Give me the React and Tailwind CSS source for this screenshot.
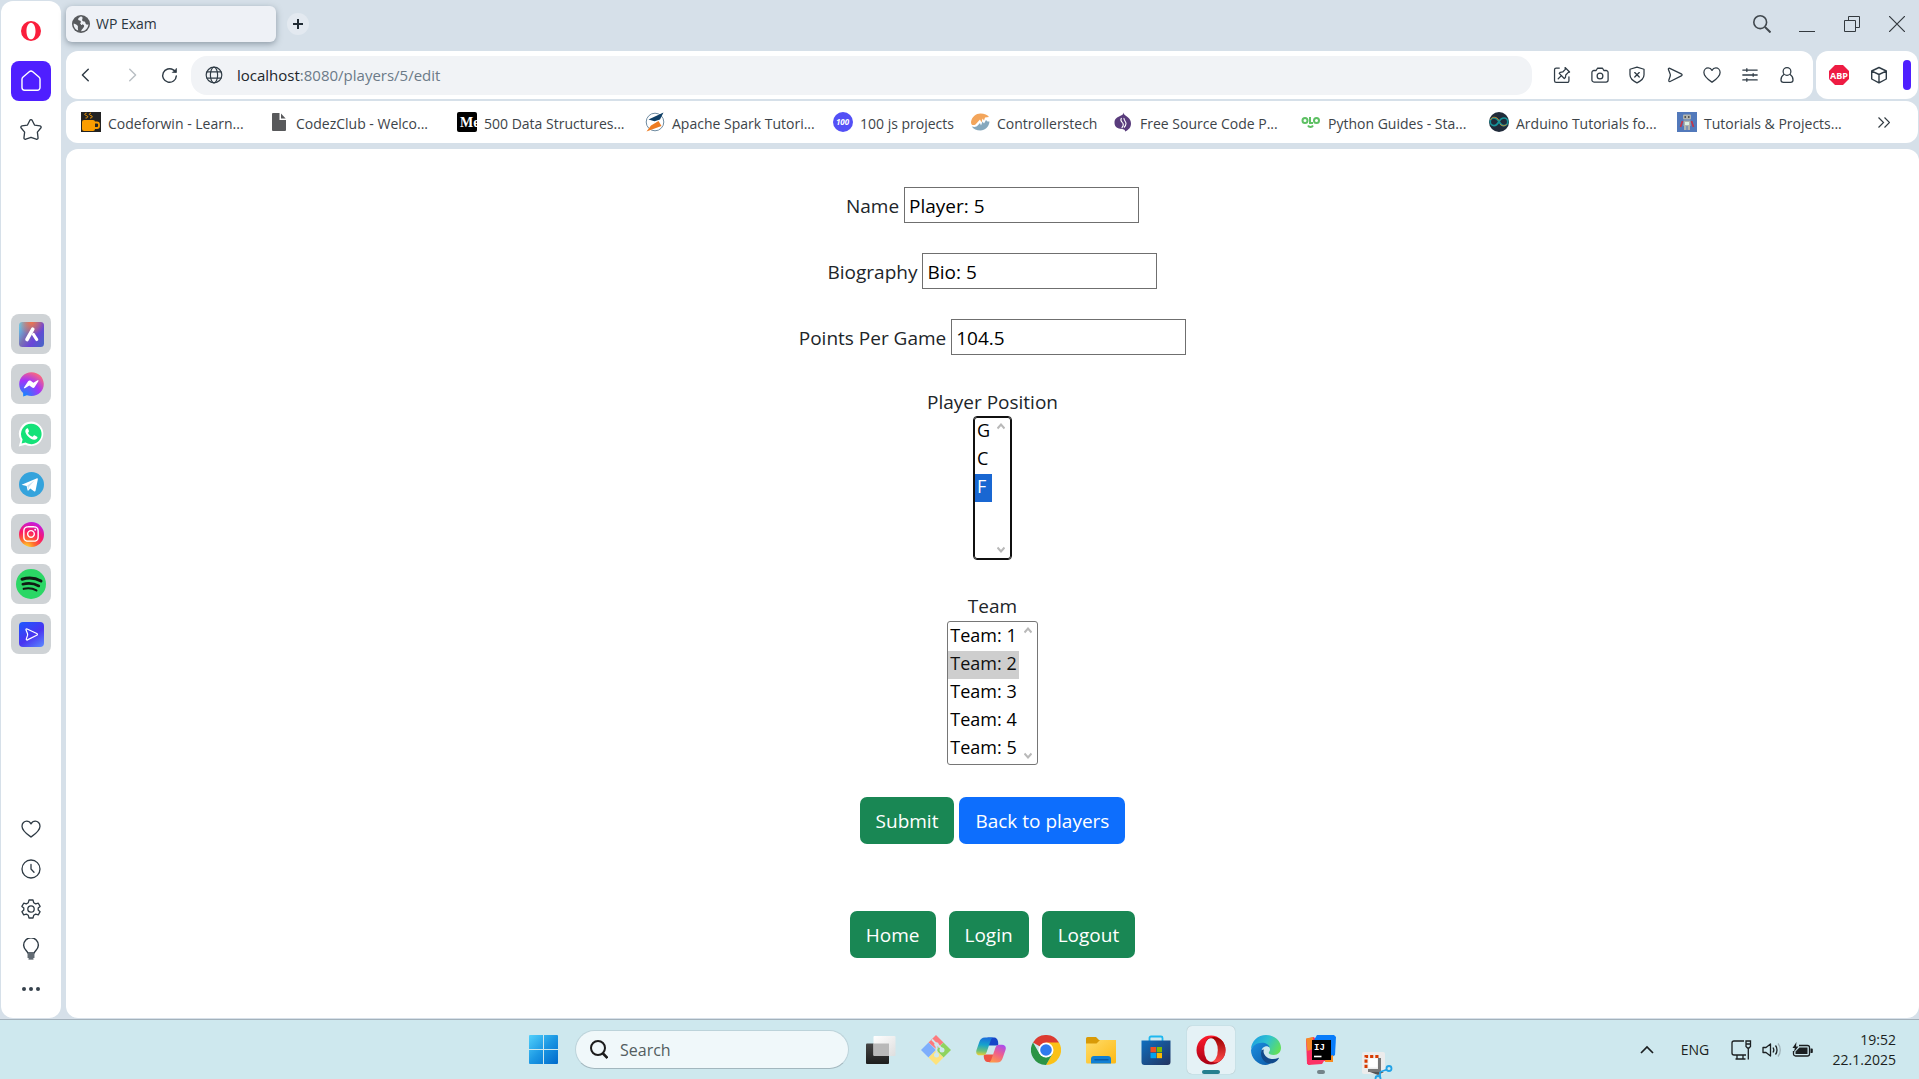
import React from "react";
import { FaInstagram } from "react-icons/fa";

function Line({ size = 20, width = 1.5, children, className = "text-[#2f3b45]" }) {
  return (
    <svg
      width={size}
      height={size}
      viewBox="0 0 20 20"
      fill="none"
      stroke="currentColor"
      strokeWidth={width}
      strokeLinecap="round"
      strokeLinejoin="round"
      className={"shrink-0 " + className}
      aria-hidden="true"
    >
      {children}
    </svg>
  );
}

const heart = <path d="M10 18C7 15.900 1 12 1 7.200 1 4.200 3.300 2.200 5.700 2.200c1.900 0 3.400 1 4.300 2.700.9-1.700 2.400-2.700 4.300-2.700 2.400 0 4.700 2 4.700 5 0 4.800-6 8.700-9 10.800z" />;
const sendShape = <path d="M4.200 2.600 17 8.700c1.200.6 1.200 1.700 0 2.300L4.600 17.200c-1 .5-1.900-.4-1.500-1.400l1.600-4.600c.2-.7.2-1.400 0-2.100L2.700 4c-.4-1 .5-1.900 1.500-1.400z" />;

/* ---------- Sidebar ---------- */

function AriaLogo() {
  return (
    <svg width="25" height="25" viewBox="0 0 25 25">
      <defs>
        <linearGradient id="aria" x1="0" y1="0.2" x2="1" y2="0.8">
          <stop offset="0" stopColor="#63c6ea" />
          <stop offset=".35" stopColor="#7a6fb4" />
          <stop offset=".65" stopColor="#6a45d8" />
          <stop offset="1" stopColor="#4b62c8" />
        </linearGradient>
        <radialGradient id="ariaTop" cx=".5" cy="0" r=".55">
          <stop offset="0" stopColor="#f0724c" />
          <stop offset="1" stopColor="#f0724c" stopOpacity="0" />
        </radialGradient>
      </defs>
      <rect width="25" height="25" rx="3.500" fill="url(#aria)" />
      <rect width="25" height="25" rx="3.500" fill="url(#ariaTop)" />
      <path d="M13.800 7.200 8 17.500" stroke="#fff" strokeWidth="3.600" strokeLinecap="round" />
      <path d="m14.500 12.500 3.200 5" stroke="#fff" strokeWidth="3.200" strokeLinecap="round" />
    </svg>
  );
}

function MessengerLogo() {
  return (
    <svg width="25" height="25" viewBox="0 0 25 25">
      <defs>
        <radialGradient id="msg" cx=".2" cy="1" r="1.1">
          <stop offset="0" stopColor="#0a8cff" />
          <stop offset=".6" stopColor="#a334fa" />
          <stop offset="1" stopColor="#ff6a78" />
        </radialGradient>
      </defs>
      <path d="M12.500.2C5.500.2.200 5.300.200 12.200c0 3.600 1.500 6.700 3.900 8.800l.1 3.600 3.700-1.400c1.400.5 3 .8 4.600.8 7 0 12.300-5 12.300-11.900S19.500.2 12.500.2z" fill="url(#msg)" />
      <path d="m5 15.500 4.100-6.200c.6-.9 1.700-1.100 2.600-.5l2.700 2 4.200-2.500c.6-.3 1.200.2.9.8l-3.800 6c-.6.9-1.700 1.100-2.600.5l-2.800-2-4.400 2.600c-.6.400-1.300-.1-.9-.7z" fill="#fff" />
    </svg>
  );
}

function WhatsLogo() {
  return (
    <svg width="26" height="26" viewBox="0 0 26 26">
      <path d="M13.200.5A12.300 12.300 0 0 0 2.600 19L.8 25.400l6.500-1.700A12.300 12.300 0 1 0 13.200.5z" fill="#fff" />
      <path d="M13.200 2.800A10.200 10.200 0 0 0 4.600 18.400l-1 4 4-1A10.200 10.200 0 1 0 13.200 2.800z" fill="#15e279" />
      <path d="M9.700 7.200c-.9 0-2.400 1-2.400 3.100 0 3.500 5.500 8.500 9 8.500 1.700 0 3.200-1.300 3.200-2.500 0-.6-.3-.7-2.700-1.900-.7-.3-1 0-1.800 1-.4.5-.8.3-1.700-.1-1.200-.6-2.500-1.800-3.200-3.100-.3-.6.900-1.100.9-2 0-.4-.7-2.100-.9-2.500-.1-.4-.2-.5-.4-.5z" fill="#fff" />
    </svg>
  );
}

function TelegramLogo() {
  return (
    <span className="grid size-[25px] place-items-center rounded-full bg-[#34a3dc]">
      <svg width="25" height="25" viewBox="0 0 25 25">
        <path d="m3.200 12.400 14.300-6c.9-.4 1.500.1 1.300 1.200l-2.200 11c-.2 1-.8 1.200-1.600.7l-3.700-2.700-1.900 1.900c-.5.4-.8.3-.9-.4l-.9-4-4.300-1c-.7-.2-.7-.4-.1-.7z" fill="#fff" />
        <path d="m8.300 13.600 7.200-5-5.600 6.300-.5 2.800" fill="#c8e2f2" />
      </svg>
    </span>
  );
}

function InstaLogo() {
  return (
    <span className="grid size-[25px] place-items-center rounded-full bg-[radial-gradient(circle_at_30%_105%,#ffd22e_5%,#ff6a2c_28%,#fb1866_55%,#c41be0_85%,#7c1cf0)] text-white">
      <FaInstagram size={18} />
    </span>
  );
}

function SpotifyLogo() {
  return (
    <span className="grid size-[30px] place-items-center rounded-full bg-[#2bd765]">
      <svg width="30" height="30" viewBox="0 0 30 30" fill="none" stroke="#101a14" strokeLinecap="round">
        <path d="M6 10.200c6.500-1.900 13.500-1.300 19 1.800" strokeWidth="3" />
        <path d="M6.800 15.200c5.500-1.500 11.300-.9 16 1.800" strokeWidth="2.600" />
        <path d="M7.700 19.800c4.500-1 8.900-.6 12.700 1.600" strokeWidth="2.200" />
      </svg>
    </span>
  );
}

function PlayerLogo() {
  return (
    <span className="grid size-[25px] place-items-center rounded-[4px] bg-[linear-gradient(145deg,#1c59ff,#4a34f0_55%,#5b8cff)]">
      <Line size={15} width={1.6} className="text-white">{sendShape}</Line>
    </span>
  );
}

const apps = [
  ["Aria", AriaLogo],
  ["Messenger", MessengerLogo],
  ["WhatsApp", WhatsLogo],
  ["Telegram", TelegramLogo],
  ["Instagram", InstaLogo],
  ["Spotify", SpotifyLogo],
  ["Player", PlayerLogo],
];

function OperaO({ className, size }) {
  return (
    <svg width={size} height={size} viewBox="0 0 30 30" className={className}>
      <path fillRule="evenodd" d="M15 0a15 15 0 1 0 0 30 15 15 0 0 0 0-30zm0 2.500c4 0 6.800 5.600 6.800 12.500S19 27.500 15 27.500 8.200 21.900 8.200 15 11 2.500 15 2.500z" fill="currentColor" />
    </svg>
  );
}

function Sidebar() {
  return (
    <nav className="my-px ml-px flex w-[60px] shrink-0 flex-col items-center rounded-xl bg-white pt-[10px] pb-[9px]">
      <button aria-label="Menu" className="grid size-10 place-items-center">
        <OperaO size={20} className="text-[#fa1e3c]" />
      </button>
      <button aria-label="Home" className="mt-[10px] grid size-10 place-items-center rounded-lg bg-[#4f1fff]">
        <Line size={22} width={1.3} className="text-white">
          <path d="M1.800 8.300c0-.8.400-1.500 1-2l5.600-4.700a2.500 2.500 0 0 1 3.200 0l5.600 4.700c.6.500 1 1.200 1 2v7.700a2.400 2.400 0 0 1-2.400 2.400H4.200A2.400 2.400 0 0 1 1.800 16z" />
        </Line>
      </button>
      <button aria-label="Pinboards" className="mt-[9px] grid size-10 place-items-center">
        <Line size={22} width={1.2}>
          <path d="M8.900 1.300c.5-.9 1.700-.9 2.200 0l2.100 4.200 5 .8c1 .200 1.300 1.200.7 1.900l-3.100 3.700.6 5.200c.1 1-.8 1.700-1.700 1.200L10 16.600l-4.700 1.700c-.9.500-1.800-.2-1.700-1.200l.6-5.200-3.100-3.700c-.6-.7-.3-1.700.7-1.900l5-.8z" />
        </Line>
      </button>
      <div className="mt-[164px] flex flex-col gap-[10px]">
        {apps.map(([name, Logo]) => (
          <button key={name} aria-label={name} className="grid size-10 place-items-center rounded-lg bg-[#cfd3d6]">
            <Logo />
          </button>
        ))}
      </div>
      <div className="mt-auto flex flex-col">
        <button aria-label="Likes" className="grid size-10 place-items-center">
          <Line size={20} width={1.3}>{heart}</Line>
        </button>
        <button aria-label="History" className="grid size-10 place-items-center">
          <Line size={20} width={1.3}>
            <circle cx="10" cy="10" r="9" />
            <path d="M10 5.500V10l3 3.200" />
          </Line>
        </button>
        <button aria-label="Settings" className="grid size-10 place-items-center">
          <Line size={20} width={1.3}>
            <circle cx="10" cy="10" r="3.200" />
            <path d="M8 1h4l.7 2.700 2 1.200 2.600-.7 1.800 3.200L17.200 9v2l1.900 1.700-1.800 3.100-2.600-.7-2 1.200L12 19H8l-.7-2.700-2-1.200-2.600.7-1.800-3.100L2.800 11V9L.9 7.400l1.800-3.200 2.600.7 2-1.200z" />
          </Line>
        </button>
        <button aria-label="Tips" className="grid size-10 place-items-center">
          <Line size={22} width={1.3}>
            <path d="M7 13.600c0-1.500-3.700-3.400-3.700-7.100a6.700 6.700 0 0 1 13.400 0c0 3.700-3.700 5.600-3.700 7.100zM7.300 15.500h5.400M7.300 17.200h5.400M8.300 19h3.400" />
          </Line>
        </button>
        <button aria-label="More" className="grid size-10 place-items-center">
          <svg width="20" height="6" viewBox="0 0 20 6" fill="#36424c">
            <circle cx="3" cy="3" r="2" />
            <circle cx="10" cy="3" r="2" />
            <circle cx="17" cy="3" r="2" />
          </svg>
        </button>
      </div>
    </nav>
  );
}

/* ---------- Tab strip and toolbar ---------- */

function TabStrip() {
  return (
    <header className="flex h-[51px] items-center pb-[3px]">
      <div className="flex h-9 w-[210px] items-center rounded-md bg-[#eef1f6] px-[6px] shadow-[0_2px_6px_rgba(70,85,100,0.5)]">
        <svg width="18" height="18" viewBox="0 0 18 18" className="shrink-0">
          <circle cx="9" cy="9" r="9" fill="#585b5e" />
          <path d="M8.700 1.600c-1.600.8-2.900 2-2.500 3.200.4 1.200 2.400.4 2.700 1.700.3 1.100-1 1.400-.6 2.300.4.800 2.600.2 3.500 1.300.8 1 .1 2.400-1 3.300-1 .8-1.300 1.800-1.700 2.900 4.300.2 7.200-3.300 7.300-7-1 .6-1.700.6-2.500-.2-.8-.9-.2-1.900-1.400-2.500-1-.5-2-.1-2.300-1.200-.3-1.200.7-2 .3-2.900-.3-.7-1-.9-1.800-.9zM1.700 8.500c1.800.5 3.600 1.200 4.100 2.600.4 1.200-.2 2.100.2 3.500l.2 1C3.200 14.500 1.400 11.600 1.700 8.500z" fill="#eef1f6" />
        </svg>
        <span className="ml-[6px] text-sm text-[#2b3640]">WP Exam</span>
      </div>
      <button aria-label="New tab" className="ml-[11px] grid size-[22px] place-items-center rounded-full bg-[#e3e9f0]">
        <svg width="10" height="10" viewBox="0 0 10 10" stroke="#1f2a33" strokeWidth="2">
          <path d="M5 0v10M0 5h10" />
        </svg>
      </button>
      <div className="ml-auto flex">
        <button aria-label="Search tabs" className="grid h-9 w-[45px] place-items-center">
          <svg width="18" height="18" viewBox="0 0 18 18" fill="none" stroke="#41484e" strokeWidth="1.600">
            <circle cx="7.200" cy="7.200" r="6.400" />
            <path d="m12 12 5.500 5.500" strokeWidth="2" />
          </svg>
        </button>
        <button aria-label="Minimize" className="grid h-9 w-[45px] place-items-center">
          <svg width="16" height="16" viewBox="0 0 16 16" stroke="#33393e">
            <path d="M0 15.500h16" />
          </svg>
        </button>
        <button aria-label="Restore" className="grid h-9 w-[45px] place-items-center">
          <svg width="16" height="16" viewBox="0 0 16 16" fill="none" stroke="#33393e">
            <path d="M.5 4.500h11v11H.5zM4.500 4.500v-4h11v11h-4" />
          </svg>
        </button>
        <button aria-label="Close" className="grid h-9 w-[45px] place-items-center">
          <svg width="16" height="16" viewBox="0 0 16 16" stroke="#33393e" strokeWidth="1.200">
            <path d="m0 0 16 16M16 0 0 16" />
          </svg>
        </button>
      </div>
    </header>
  );
}

const toolbarIcons = [
  ["Add to pinboard", <><path d="M7 2.300H3.500a1.800 1.800 0 0 0-1.800 1.800v12.400a1.800 1.800 0 0 0 1.800 1.800h12.400a1.800 1.800 0 0 0 1.800-1.800V12M9.300 10.700 5.800 14.200" /><path d="M13.400 1.700 18.400 6.700l-1.400.4-2.800 2.900-.4 2.700-1.300 1.200L6.900 8.200l1.200-1.200 2.700-.4 2.900-2.900z" /></>],
  ["Snapshot", <><path d="M3.300 5h2.400l1.500-2.500h5.600L14.300 5h2.400a2.300 2.300 0 0 1 2.300 2.300v8.200a2.300 2.300 0 0 1-2.300 2.300H3.300A2.300 2.300 0 0 1 1 15.500V7.300A2.300 2.300 0 0 1 3.300 5z" /><circle cx="10" cy="11" r="3.200" /></>],
  ["Ad blocker", <><path d="M10 1.200 17.800 3.600v6.200c0 4.300-3.800 7.100-7.800 9-4-1.900-7.800-4.700-7.800-9V3.600z" /><path d="m7.500 7.300 5 5M12.500 7.300l-5 5" /></>],
  ["Send", sendShape],
  ["Like", heart],
  ["Easy setup", <><path d="M2 4.500h16M2 10h16M2 15.500h16M6.500 3v3M13.500 8.500v3M6.500 14v3" /></>],
  ["Profile", <><circle cx="10" cy="6" r="4.300" /><path d="M6.500 9.500c-2 1.300-3.200 3.600-3.200 6 0 1.700 1.100 2.700 2.800 2.700h7.800c1.700 0 2.800-1 2.800-2.700 0-2.400-1.200-4.700-3.200-6" /></>],
];

function Toolbar() {
  return (
    <div className="flex h-12 gap-[3px] pr-px">
      <div className="flex min-w-0 flex-1 items-center rounded-xl bg-white pr-[7px]">
        <button aria-label="Back" className="grid h-10 w-10 place-items-center">
          <Line size={18} width={1.6}><path d="M12.500 3.500 6 10l6.500 6.500" /></Line>
        </button>
        <button aria-label="Forward" className="ml-[6px] grid h-10 w-10 place-items-center">
          <Line size={18} width={1.6} className="text-[#b9bfc4]"><path d="M7.500 3.500 14 10l-6.500 6.500" /></Line>
        </button>
        <button aria-label="Reload" className="grid h-10 w-[34px] place-items-center">
          <Line size={17} width={1.7}>
            <path d="M18 10.500A8 8 0 1 1 14.500 3.400L17 5.500" />
            <path d="M18.200 2v4.500h-4.500z" fill="currentColor" strokeWidth=".8" />
          </Line>
        </button>
        <div className="ml-[5px] flex h-[39px] min-w-0 flex-1 items-center rounded-2xl bg-[#f1f3f6] pl-[14px]">
          <Line size={18} width={1.3}>
            <circle cx="10" cy="10" r="8.700" />
            <ellipse cx="10" cy="10" rx="4" ry="8.700" />
            <path d="M2.300 6.500h15.400M2.300 13.500h15.400" />
          </Line>
          <a href="#address" aria-label="Address" className="ml-[14px] text-[15px] text-[#6b7a88]">
            <span className="text-[#20262b]">localhost</span>:8080/players/5/edit
          </a>
        </div>
        <div className="ml-[11px] flex">
          {toolbarIcons.map(([name, shape], i) => (
            <button key={name} aria-label={name} className={"grid h-10 place-items-center " + (i % 2 ? "w-[37px]" : "w-[38px]")}>
              <Line size={18} width={1.4}>{shape}</Line>
            </button>
          ))}
        </div>
      </div>
      <div className="flex w-[102px] shrink-0 items-center rounded-xl bg-white pl-[13px]">
        <button aria-label="AdBlock Plus">
          <svg width="20" height="20" viewBox="0 0 20 20">
            <path d="M6 0h8l6 6v8l-6 6H6l-6-6V6z" fill="#ee1c43" />
            <text x="10" y="13.500" textAnchor="middle" fontFamily="Open Sans, sans-serif" fontSize="9" fontWeight="700" fill="#fff">ABP</text>
          </svg>
        </button>
        <button aria-label="Extensions" className="ml-5">
          <Line size={20} width={1.4}>
            <path d="M10 2.500 17.300 6v8L10 17.800 2.700 14V6zM2.900 6.200 10 9.500l7.100-3.300M10 9.500v8" />
          </Line>
        </button>
        <span className="ml-[14px] h-[30px] w-2 rounded-full bg-[#4f1fff]" />
      </div>
    </div>
  );
}

/* ---------- Bookmarks ---------- */

const bookmarks = [
  { text: "Codeforwin - Learn...", wide: "w-[139px]", icon: (
    <svg width="20" height="20" viewBox="0 0 20 20"><rect width="20" height="20" fill="#222" /><rect x="1" y="8" width="13" height="11" rx="2" fill="#fb9d00" /><path d="M13 10.500h3a2 2 0 0 1 2 2v1.500a2 2 0 0 1-2 2h-3" fill="none" stroke="#fb9d00" strokeWidth="1.800" /><path d="M5.500 1.200c-2.500.2-2 2 0 2.400s1.500 2.600-1 2.400M10 1.200c-2.500.2-2 2 0 2.400s1.500 2.600-1 2.400" fill="none" stroke="#fb9d00" /></svg>
  ) },
  { text: "CodezClub - Welco...", wide: "w-[139px]", icon: (
    <svg width="20" height="20" viewBox="0 0 20 20" fill="#58595b"><path d="M3 2a1 1 0 0 1 1-1h6.500v7H17v10a1 1 0 0 1-1 1H4a1 1 0 0 1-1-1z" /><path d="M12 1.500 16.700 6.500H12z" /></svg>
  ) },
  { text: "500 Data Structures...", wide: "w-[139px]", icon: (
    <svg width="20" height="20" viewBox="0 0 20 20"><clipPath id="me"><rect width="20" height="20" rx="2" /></clipPath><rect width="20" height="20" rx="2" /><text x="3" y="14.500" clipPath="url(#me)" fontFamily="Liberation Serif, serif" fontSize="14" fontWeight="700" fill="#fff">Me</text></svg>
  ) },
  { text: "Apache Spark Tutori...", wide: "w-[139px]", icon: (
    <svg width="20" height="20" viewBox="0 0 20 20"><circle cx="10" cy="10" r="8.800" fill="#fff" stroke="#6f8ba1" /><path d="M18.500.5 15 7.500 9.500 9.200 3.500 7.500z" fill="#0f3f66" /><path d="m1.500 19.500 4.500-6 7.500-4.500 3 5z" fill="#ee7b20" /></svg>
  ) },
  { text: "100 js projects", wide: "w-[88px]", icon: (
    <svg width="20" height="20" viewBox="0 0 20 20"><circle cx="10" cy="10" r="10" fill="#5350f6" /><text x="9.500" y="13" textAnchor="middle" fontFamily="Open Sans, sans-serif" fontSize="8" fontStyle="italic" fontWeight="700" fill="#fff">100</text></svg>
  ) },
  { text: "Controllerstech", wide: "w-[94px]", icon: (
    <svg width="20" height="20" viewBox="0 0 20 20"><path d="M1 10C2 4.500 6 1.500 10.500 1.500c4 0 7 1.200 8.500 3.500l-4 .5-1 3-1.500-2-1 4-1.500-3-4.500 5c-2 1-4.500 1-4.500-2.500z" fill="#f3a55b" /><path d="M19.500 9.500c-.5 5.500-4.500 9-9 9-4 0-7-1.500-8.800-4 3 1 5 .5 6.500-1.500l1.800-2 1 2.500 1.500-4 1.500 2 2-3.500 1.500 1.500z" fill="#86a8bd" /></svg>
  ) },
  { text: "Free Source Code P...", wide: "w-[139px]", icon: (
    <svg width="20" height="20" viewBox="0 0 20 20"><path d="M10.500.5c0 2 1.500 2.500 4 4.500 2.500 2 3.500 4 3.500 6.500 0 4-2.500 6.500-6 8 .5-2-2-2.200-4.800-2.700C3.500 16.300 1.500 14 1.500 10.500c0-4 3-5.500 5.500-6.500s3-1.500 3.500-3.500z" fill="#593c7c" /><path d="M8.500 6c-2 2.500.5 4 1.500 5.500 1 1.600 0 2.800-1.200 4.500M11 6c-.5 2 2 3.500 2 5.500 0 1.800-.8 2.800-2 4" fill="none" stroke="#fff" strokeWidth="1.100" /></svg>
  ) },
  { text: "Python Guides - Sta...", wide: "w-[139px]", icon: (
    <svg width="20" height="20" viewBox="0 0 20 20" fill="none" stroke="#5dc063" strokeWidth="2"><circle cx="4" cy="8.500" r="2.500" /><path d="M9 5v6h3" /><circle cx="15.500" cy="8.500" r="2.500" /><path d="M7 13.500c1 2 4 2 5 0" /></svg>
  ) },
  { text: "Arduino Tutorials fo...", wide: "w-[139px]", icon: (
    <svg width="20" height="20" viewBox="0 0 20 20"><circle cx="10" cy="10" r="10" fill="#202b3a" /><path d="M10 9.500C8 6.500 6.500 6 5 6a3.800 3.800 0 0 0 0 7.600c2 0 3.500-1.300 5-4.100s3-3.500 5-3.500a3.800 3.800 0 0 1 0 7.600c-2 0-3.500-1.300-5-4.100z" fill="none" stroke="#159299" strokeWidth="1.700" /><path d="M1.500 8C3 4 8 4.500 10 8.500M11 12c2 2.500 5 2 6.500.5" fill="none" stroke="#c98c2c" /></svg>
  ) },
  { text: "Tutorials & Projects...", wide: "w-[139px]", icon: (
    <svg width="20" height="20" viewBox="0 0 20 20"><rect width="20" height="20" fill="#5279bb" /><path d="M7 2.500h6a1 1 0 0 1 1 1v3a1 1 0 0 1-1 1H7a1 1 0 0 1-1-1v-3a1 1 0 0 1 1-1zM6.500 8.500h7V14h-7zM7 14h2.500v4H7zM10.500 14H13v4h-2.500z" fill="#b0b3ae" /><path d="M5.500 9 3.500 15M14.500 9l2 6" stroke="#c0364a" strokeWidth="1.700" /><path d="M7.500 5h1.500M11 5h1.500" stroke="#333" strokeWidth="1.300" /><path d="M8 10h4v3H8z" fill="#ddf1e4" /></svg>
  ) },
];

function Bookmarks() {
  return (
    <div className="mt-[2px] mr-px flex h-[42px] items-center gap-[22px] overflow-hidden rounded-xl bg-white pl-[15px]">
      {bookmarks.map((b) => (
        <a key={b.text} href="#bookmark" className="flex shrink-0 items-center gap-[7px]">
          {b.icon}
          <span className={"pt-[3px] text-sm whitespace-nowrap text-[#3d4449] " + b.wide}>{b.text}</span>
        </a>
      ))}
      <button aria-label="More bookmarks" className="mr-7 ml-auto">
        <svg width="12" height="11" viewBox="0 0 12 11" fill="none" stroke="#333c43" strokeWidth="1.200">
          <path d="m.5.5 5 5-5 5M6.500.5l5 5-5 5" />
        </svg>
      </button>
    </div>
  );
}

/* ---------- Page ---------- */

const fields = [
  ["name", "Name", "Player: 5"],
  ["bio", "Biography", "Bio: 5"],
  ["points", "Points Per Game", "104.5"],
];

function ScrollArrows() {
  return (
    <span className="pointer-events-none absolute inset-y-[6px] right-[6px] flex flex-col justify-between">
      <svg width="8" height="7" viewBox="0 0 8 7" fill="none" stroke="#b9b9b9" strokeWidth="2"><path d="m.5 5.500 3.500-4 3.500 4" /></svg>
      <svg width="8" height="7" viewBox="0 0 8 7" fill="none" stroke="#b9b9b9" strokeWidth="2"><path d="m.5 1.500 3.500 4 3.500-4" /></svg>
    </span>
  );
}

function ListField({ id, label, options, value, focused }) {
  return (
    <div className="flex flex-col items-center">
      <label htmlFor={id} className="leading-[30px]">{label}</label>
      <div className="relative">
        <select
          id={id}
          size={5}
          defaultValue={value}
          autoFocus={focused}
          className={
            "block overflow-hidden rounded-[3px] border border-[#767676] bg-white pr-[18px] text-lg text-black outline-[#101010] focus:border-[#101010] focus:outline-1 " +
            (focused ? "" : "py-px")
          }
        >
          {options.map((o) => (
            <option key={o} value={o} className="h-7 min-h-7 px-[2px] py-0 leading-7">{o}</option>
          ))}
        </select>
        <ScrollArrows />
      </div>
    </div>
  );
}

const btn = "inline-flex h-[47px] items-center rounded-[7px] px-4 pt-px text-white";

function Page() {
  return (
    <main className="mt-[6px] mb-px min-h-0 flex-1 rounded-xl bg-white pt-[38px] text-[19px] text-[#212529]">
      <form onSubmit={(e) => e.preventDefault()} className="flex flex-col items-center">
        <div className="flex flex-col items-center gap-[30px]">
          {fields.map(([id, label, value]) => (
            <div key={id} className="flex items-center gap-[5px]">
              <label htmlFor={id} className="pt-[2px]">{label}</label>
              <input id={id} defaultValue={value} className="h-9 w-[235px] border border-[#6f6f6f] bg-white px-1 pt-[2px] text-black" />
            </div>
          ))}
        </div>
        <div className="mt-8">
          <ListField id="position" label="Player Position" options={["G", "C", "F"]} value="F" focused />
        </div>
        <div className="mt-8">
          <ListField id="team" label="Team" options={["Team: 1", "Team: 2", "Team: 3", "Team: 4", "Team: 5"]} value="Team: 2" />
        </div>
        <div className="mt-8 flex gap-[5px]">
          <button type="submit" className={btn + " bg-[#198754]"}>Submit</button>
          <a href="#players" className={btn + " bg-[#0d6efd]"}>Back to players</a>
        </div>
      </form>
      <div className="mt-[67px] flex justify-center gap-[13px]">
        <a href="#home" className={btn + " bg-[#198754]"}>Home</a>
        <a href="#login" className={btn + " bg-[#198754]"}>Login</a>
        <a href="#logout" className={btn + " bg-[#198754]"}>Logout</a>
      </div>
    </main>
  );
}

/* ---------- Taskbar ---------- */

const taskApps = [
  ["Task view", (
    <svg width="30" height="30" viewBox="0 0 30 30">
      <defs>
        <linearGradient id="tvd" x1="0" y1="0" x2="0" y2="1"><stop offset="0" stopColor="#454545" /><stop offset="1" stopColor="#1d1d1d" /></linearGradient>
        <linearGradient id="tvl" x1="0" y1="0" x2="1" y2="1"><stop offset="0" stopColor="#fff" /><stop offset="1" stopColor="#dedede" /></linearGradient>
      </defs>
      <rect x="0" y="8.500" width="23" height="20.500" rx="1" fill="url(#tvd)" />
      <rect x="7.500" y="1" width="22" height="20" rx="1" fill="url(#tvl)" />
      <path d="M7.500 8.500H23V21H8.500a1 1 0 0 1-1-1z" fill="#b9b9b9" />
    </svg>
  )],
  ["Git", (
    <svg width="30" height="30" viewBox="0 0 30 30">
      <path d="M15 0 22.500 7.500 15 14 7.500 7.500z" fill="#fc7a7d" />
      <path d="M7.500 7.500 15 15l-7.500 7.500L0 15z" fill="#7eaefc" />
      <path d="M22.500 7.500 30 15l-7.500 7.500L15 15z" fill="#8fd35e" />
      <path d="M15 15l7.500 7.500L15 30l-7.500-7.500z" fill="#fde27c" />
      <path d="M11 4.500 15.500 9v11.500M16 9l6 6" stroke="#cfe8ee" strokeWidth="1.800" fill="none" />
      <g fill="#cfe8ee"><circle cx="15.500" cy="9.500" r="2.200" /><circle cx="21" cy="15" r="2.500" /><circle cx="15.500" cy="20" r="2.500" /></g>
    </svg>
  )],
  ["Copilot", (
    <svg width="30" height="28" viewBox="0 0 30 28">
      <defs>
        <linearGradient id="cp1" x1=".3" y1="0" x2=".2" y2="1"><stop offset="0" stopColor="#1a6fdc" /><stop offset=".4" stopColor="#17a3cc" /><stop offset=".75" stopColor="#6cc07a" /><stop offset="1" stopColor="#f0cf31" /></linearGradient>
        <linearGradient id="cp2" x1=".8" y1="0" x2=".3" y2="1"><stop offset="0" stopColor="#a94cf0" /><stop offset=".5" stopColor="#f0608a" /><stop offset="1" stopColor="#ff9a4a" /></linearGradient>
      </defs>
      <path d="M13 9.500h9c.8-2.500-.4-8-3.500-8h-7z" fill="#1646c8" />
      <path d="M17 18.500H8c-.8 2.500.4 7.500 3.500 7.500H17z" fill="#ee5344" />
      <path d="M9 1.500h9c-2 0-2.800 1.500-3.500 3.500l-3.800 11c-.6 2-1.700 3.300-3.700 3.300H4c-3 0-4.500-2-3.500-5.300l2.800-8C4.300 3 6 1.500 9 1.500z" fill="url(#cp1)" />
      <path d="M21 26.500h-9c2 0 2.800-1.500 3.500-3.500l3.800-11c.6-2 1.700-3.300 3.700-3.300h3c3 0 4.500 2 3.500 5.300l-2.800 8c-1 3-2.700 4.500-5.700 4.500z" fill="url(#cp2)" />
    </svg>
  )],
  ["Chrome", (
    <svg width="30" height="30" viewBox="0 0 30 30">
      <path d="M15 15 2 7.500A15 15 0 0 1 28 7.500z" fill="#dc3b31" />
      <path d="M28 7.500H15L21.500 18.700 15 30A15 15 0 0 0 28 7.500z" fill="#fbc116" />
      <path d="M15 30A15 15 0 0 1 2 7.500L8.500 18.700 15 22.500l6.500-3.800z" fill="#2a9446" />
      <circle cx="15" cy="15" r="7.500" fill="#fff" />
      <circle cx="15" cy="15" r="5.800" fill="#2f7bee" />
    </svg>
  )],
  ["File Explorer", (
    <svg width="30" height="30" viewBox="0 0 30 30">
      <defs><linearGradient id="fe" x1="0" y1="0" x2="1" y2="1"><stop offset="0" stopColor="#ffdc6a" /><stop offset="1" stopColor="#fdb913" /></linearGradient></defs>
      <path d="M0 3.500A1.500 1.500 0 0 1 1.500 2H10l3 3h15.500A1.500 1.500 0 0 1 30 6.500V14H0z" fill="#d99a07" />
      <path d="M0 8.500h10.500L14 5h16v22a1.500 1.500 0 0 1-1.500 1.500h-27A1.500 1.500 0 0 1 0 27z" fill="url(#fe)" />
      <path d="M5 28.500V24a3 3 0 0 1 3-3h14a3 3 0 0 1 3 3v4.500z" fill="#1180d4" />
      <path d="M9 24.800h13" stroke="#0a5ca8" strokeWidth="1.500" strokeLinecap="round" />
    </svg>
  )],
  ["Store", (
    <svg width="30" height="30" viewBox="0 0 30 30">
      <defs><linearGradient id="st" x1="0" y1="0" x2="1" y2="1"><stop offset="0" stopColor="#0f6fc0" /><stop offset="1" stopColor="#23335f" /></linearGradient></defs>
      <path d="M8.500 6.500V3a1.500 1.500 0 0 1 1.500-1.500h10A1.500 1.500 0 0 1 21.500 3v3.500" fill="none" stroke="#1fb8ef" strokeWidth="1.800" />
      <path d="M.5 5.500h29V27a3 3 0 0 1-3 3h-23a3 3 0 0 1-3-3z" fill="url(#st)" />
      <path d="M9.500 12H15v5.300H9.500z" fill="#f25022" /><path d="M15.700 12H21v5.300h-5.300z" fill="#7fba00" />
      <path d="M9.500 18H15v5.200H9.500z" fill="#00a4ef" /><path d="M15.700 18H21v5.200h-5.300z" fill="#ffb900" />
    </svg>
  )],
  ["Opera", (
    <svg width="30" height="30" viewBox="0 0 30 30">
      <defs>
        <linearGradient id="op1" x1="0" y1="0" x2="0" y2="1"><stop offset="0" stopColor="#ff1b2d" /><stop offset="1" stopColor="#a70014" /></linearGradient>
        <linearGradient id="op2" x1="0" y1="0" x2="0" y2="1"><stop offset="0" stopColor="#9c0000" /><stop offset="1" stopColor="#ff4b4b" /></linearGradient>
        <clipPath id="opc"><circle cx="15" cy="15" r="14.500" /></clipPath>
      </defs>
      <circle cx="15" cy="15" r="14.500" fill="url(#op1)" />
      <path clipPath="url(#opc)" d="M10.200 5.400C11.700 3.500 13.700 2.400 15.900 2.400 18 1.500 21 2 24.700 4.200 32 9 32 21 24.700 25.800c-4 2.500-10 2-14.500-1.200z" fill="url(#op2)" />
      <ellipse cx="15" cy="15" rx="6.800" ry="11.800" fill="#e5f2f6" />
    </svg>
  )],
  ["Edge", (
    <svg width="30" height="30" viewBox="0 0 30 30">
      <defs>
        <linearGradient id="ed1" x1="0" y1=".2" x2="1" y2=".6"><stop offset="0" stopColor="#1b9de2" /><stop offset=".5" stopColor="#2fc2cf" /><stop offset="1" stopColor="#62e05a" /></linearGradient>
        <linearGradient id="ed2" x1="0" y1="0" x2="1" y2="1"><stop offset="0" stopColor="#1b8fe0" /><stop offset="1" stopColor="#0d5aa8" /></linearGradient>
      </defs>
      <path d="M0 14C.5 6 7 0 15 0c8.500 0 15 5.800 15 12.800 0 4.200-3 7.200-7.300 7.200-3 0-5-1-5-2.200 0-.8 1.300-1.300 1.300-3.300 0-3-3-5.500-7-5.500C6.500 9 2.500 11 0 14z" fill="url(#ed1)" />
      <path d="M0 15C1.500 10.500 6 7.700 11 7.700c4 0 7 2 7.800 5-1-1.200-2.500-1.700-4-1.500-3 .5-4.800 3.200-4.300 6.800.7 5 5.500 9 11 8.500C19.500 28.800 17 30 14.500 30 6.500 30 0 23 0 15z" fill="url(#ed2)" />
      <path d="M10.500 15c-1.500 5 .5 10.500 5 12.800 4.500 2 9.500 0 12.300-4.300.3-.5-.1-.9-.6-.6-4 2-9.500 1.500-12.700-2-1.700-1.900-2.500-4.500-1.600-6.500z" fill="#114a8b" />
    </svg>
  )],
  ["IntelliJ IDEA", (
    <svg width="30" height="30" viewBox="0 0 30 30">
      <path d="M0 4 8 2l6 9L4 30l-3-1z" fill="#fc2f62" />
      <path d="M0 3.500 7 2v12L1.500 16z" fill="#f58a2b" />
      <path d="M11 0h17l2 2-1 18-6 4L8 5z" fill="#087cfa" />
      <path d="M3 24h24v3l-9-1-2 3-14 1z" fill="#fc3366" />
      <path d="M20 22l7-2v7h-8z" fill="#f98b1f" />
      <rect x="6" y="5" width="19" height="20" />
      <text x="8" y="14.500" fontFamily="Liberation Mono, monospace" fontSize="9" fontWeight="700" fill="#fff">IJ</text>
      <path d="M8 21.500h7.500" stroke="#fff" strokeWidth="1.600" />
    </svg>
  )],
];

function SnipIcon() {
  return (
    <svg width="32" height="28" viewBox="0 0 32 28">
      <rect width="23" height="22" rx="2" fill="#ececec" />
      <path d="M4 16V4.500h13" fill="none" stroke="#d83b01" strokeWidth="3" strokeDasharray="3.200 2" />
      <rect x="6.500" y="6.500" width="9" height="9" fill="#fff" />
      <path d="M17.500 6v12.500H6" fill="none" stroke="#777" strokeWidth="3" />
      <path d="M8 20h14l-6 3z" fill="#555" />
      <circle cx="27" cy="16.500" r="2.500" fill="none" stroke="#22a2e6" strokeWidth="1.800" />
      <path d="m18 20 7-2.500M18 20v5" stroke="#22a2e6" strokeWidth="1.800" />
      <circle cx="16" cy="26.500" r="2.500" fill="none" stroke="#22a2e6" strokeWidth="1.800" />
    </svg>
  );
}

function Taskbar() {
  return (
    <footer className="flex h-[60px] shrink-0 items-center overflow-hidden border-t border-[#a3b1bb] bg-[#cee8ee] px-[23px]">
      <div className="flex-1" />
      <div className="flex items-center">
        <button aria-label="Start" className="grid size-12 place-items-center">
          <svg width="29" height="29" viewBox="0 0 29 29">
            <defs><linearGradient id="win" x1="0" y1="0" x2="1" y2="1"><stop offset="0" stopColor="#51d0fb" /><stop offset=".5" stopColor="#1b97e3" /><stop offset="1" stopColor="#0069cb" /></linearGradient></defs>
            <path d="M1 0h13v14H0V1a1 1 0 0 1 1-1zM15 0h13a1 1 0 0 1 1 1v13H15zM0 15h14v14H1a1 1 0 0 1-1-1zM15 15h14v13a1 1 0 0 1-1 1H15z" fill="url(#win)" />
          </svg>
        </button>
        <label className="mx-2 flex h-[39px] w-[274px] items-center rounded-full border border-[#bcd3da] border-b-[#a3b7be] bg-[#f0f8fa] pl-[14px]">
          <svg width="18" height="19" viewBox="0 0 18 19" fill="none" stroke="#1c1c1c" strokeWidth="2">
            <circle cx="8" cy="8" r="7" />
            <path d="m12.500 13 5 5" strokeWidth="2.600" />
          </svg>
          <input aria-label="Search" placeholder="Search" className="ml-3 min-w-0 flex-1 bg-transparent text-base outline-none placeholder:text-[#535d60]" />
        </label>
        <div className="flex gap-[7px]">
          {taskApps.map(([name, icon]) => (
            <button
              key={name}
              aria-label={name}
              className={"relative grid size-12 place-items-center rounded-[5px] " + (name === "Opera" ? "bg-[#e5f2f6] shadow-[0_0_1px_rgba(0,0,0,0.3)]" : "")}
            >
              {icon}
              {name === "Opera" && <span className="absolute inset-x-[15px] bottom-0 h-1 rounded-full bg-[#25808f]" />}
              {name === "IntelliJ IDEA" && <span className="absolute inset-x-5 bottom-0 h-1 rounded-full bg-[#73838a]" />}
            </button>
          ))}
          <button aria-label="Snipping Tool" className="flex h-12 w-12 items-end justify-center pl-1">
            <span className="-mb-[6px]"><SnipIcon /></span>
          </button>
        </div>
      </div>
      <div className="flex flex-1 items-center justify-end text-[#1b1f21]">
        <button aria-label="Hidden icons">
          <svg width="14" height="9" viewBox="0 0 14 9" fill="none" stroke="#1b1f21" strokeWidth="1.700"><path d="m1 8 6-6 6 6" /></svg>
        </button>
        <button className="ml-[26px] w-[30px] pt-px text-sm">ENG</button>
        <button aria-label="Network, volume and battery" className="ml-[21px] flex items-center gap-[10px]">
          <svg width="21" height="20" viewBox="0 0 21 20" fill="none" stroke="#1b1f21" strokeWidth="1.300">
            <path d="M13 1H3a2 2 0 0 0-2 2v10a2 2 0 0 0 2 2h12M6 15v4M12 15v4M4.500 19h10" />
            <path d="M15 1h4.500v5.500L18 8h-1.500L15 6.500zM15 4h4.500M17.300 8v11.500" />
          </svg>
          <svg width="20" height="16" viewBox="0 0 20 16" fill="none" stroke="#1b1f21" strokeWidth="1.300">
            <path d="M1 5.500h3L8.500 2v12L4 10.500H1z" strokeLinejoin="round" />
            <path d="M11 5.500c1 1.500 1 3.500 0 5M13.500 3.500c2 2.500 2 6.500 0 9" />
            <path d="M16 1.500c3 3.500 3 9.500 0 13" stroke="#9fb0b6" />
          </svg>
          <svg width="21" height="16" viewBox="0 0 21 16">
            <path d="M7 3.500h8.500a2 2 0 0 1 2 2v6.500a2 2 0 0 1-2 2h-12a2 2 0 0 1-2-2V9" fill="none" stroke="#1b1f21" strokeWidth="1.300" />
            <path d="M7.500 5.500h8V12h-12V9.500zM18.500 6.500h1.500a.8.800 0 0 1 .8.800v3a.8.800 0 0 1-.8.800h-1.500zM4.500 0 .5 6h2.300L2 10l4.500-5.500H4z" fill="#1b1f21" />
          </svg>
        </button>
        <time className="ml-[17px] w-[66px] text-right text-sm leading-5 whitespace-nowrap">
          <span className="block">19:52</span>
          <span className="block">22.1.2025</span>
        </time>
      </div>
    </footer>
  );
}

export default function App() {
  return (
    <div className="flex h-screen flex-col overflow-hidden bg-[#d6e0e9] font-['Open_Sans','Noto_Sans',sans-serif]">
      <div className="flex min-h-0 flex-1">
        <Sidebar />
        <div className="ml-[5px] flex min-w-0 flex-1 flex-col">
          <TabStrip />
          <Toolbar />
          <Bookmarks />
          <Page />
        </div>
      </div>
      <Taskbar />
    </div>
  );
}
